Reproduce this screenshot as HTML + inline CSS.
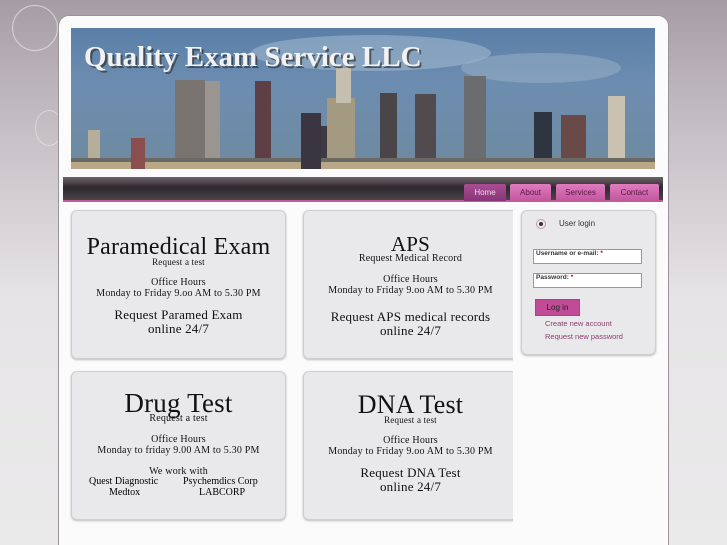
<!DOCTYPE html><html style="height:545px;background:#ebeaeb"><head><meta charset="utf-8"><style>
*{margin:0;padding:0;box-sizing:border-box}
html{overflow:hidden}
body{width:727px;height:545px;overflow:hidden;position:relative;font-family:"Liberation Serif",serif}
.bg{position:absolute;left:0;top:0;width:727px;height:545px;background:linear-gradient(#a69da4 0,#c8c2c7 140px,#e6e4e6 300px,#ebeaeb 545px)}
.a{position:absolute}
.wrap{left:58px;top:15px;width:611px;height:545px;background:#fbfbfb;border-radius:11px;border:1px solid #9a949a}
.card{position:absolute;background:#e9e8ea;border:1px solid #cfcdd0;border-radius:6px;box-shadow:0 1px 2px #bbb}
.t{position:absolute;left:0;right:0;text-align:center;color:#111;white-space:nowrap;letter-spacing:.2px}
.tab{position:absolute;top:184px;height:17px;background:linear-gradient(#e07bbf,#c2579c);color:#5a1848;font:8px "Liberation Sans",sans-serif;text-align:center;line-height:17px;border-radius:2px 2px 0 0}
</style></head><body>
<div class="bg"></div>
<div class="a" style="left:12px;top:5px;width:46px;height:46px;border-radius:50%;border:1px solid rgba(255,255,255,.5)"></div>
<div class="a" style="left:35px;top:110px;width:28px;height:36px;border-radius:50%;border:1px solid rgba(255,255,255,.4)"></div>
<div class="a wrap"></div>
<svg class="a" style="left:71px;top:28px" width="584" height="141" viewBox="0 0 584 141">
<defs><linearGradient id="s" x1="0" y1="0" x2="0" y2="1"><stop offset="0" stop-color="#5a7fa8"/><stop offset=".4" stop-color="#6d8db0"/><stop offset="1" stop-color="#6f8aa0"/></linearGradient></defs>
<rect width="584" height="141" fill="url(#s)"/>
<ellipse cx="300" cy="25" rx="120" ry="18" fill="#a9bfd4" opacity=".5"/>
<ellipse cx="470" cy="40" rx="80" ry="15" fill="#9ab1c8" opacity=".5"/>
<g fill="#4a4548">
<rect x="17" y="102" width="12" height="39" fill="#b7ae9a"/>
<rect x="104" y="52" width="30" height="89" fill="#7a7470"/>
<rect x="134" y="53" width="15" height="88" fill="#9a9590"/>
<rect x="184" y="53" width="16" height="88" fill="#5e3f45"/>
<rect x="240" y="98" width="25" height="43" fill="#3e3a44"/>
<rect x="256" y="70" width="28" height="71" fill="#a49a82"/>
<rect x="265" y="40" width="15" height="35" fill="#c5bfb0"/>
<rect x="309" y="65" width="17" height="76"/>
<rect x="344" y="66" width="21" height="75" fill="#514a4e"/>
<rect x="393" y="48" width="22" height="93" fill="#6b6c70"/>
<rect x="463" y="84" width="18" height="57" fill="#2e3440"/>
<rect x="490" y="87" width="25" height="54" fill="#6a4a48"/>
<rect x="537" y="68" width="17" height="73" fill="#c9c2b0"/>
<rect x="0" y="130" width="584" height="11" fill="#6a6a62"/>
<rect x="0" y="134" width="584" height="7" fill="#b8a888"/>
<rect x="60" y="110" width="14" height="31" fill="#8a4e4e"/>
<rect x="230" y="85" width="20" height="56" fill="#3a3540"/>
</g>
<text x="15" y="40" font-family="Liberation Serif" font-weight="bold" font-size="29" fill="#333" opacity=".7">Quality Exam Service LLC</text>
<text x="13" y="38" font-family="Liberation Serif" font-weight="bold" font-size="29" fill="#f2f2f2">Quality Exam Service LLC</text>
</svg>
<div class="a" style="left:63px;top:177px;width:600px;height:25px;background:linear-gradient(#6e6369,#2e2a2e 45%,#4a4448);border-bottom:2px solid #c25aa0"></div>
<div class="tab" style="left:464px;width:42px;background:linear-gradient(#a84d93,#8a3578);color:#f0d8ea">Home</div>
<div class="tab" style="left:510px;width:41px">About</div>
<div class="tab" style="left:556px;width:49px">Services</div>
<div class="tab" style="left:610px;width:49px">Contact</div>

<div class="card" style="left:71px;top:210px;width:215px;height:149px">
<div class="t" style="top:23px;font-size:24px">Paramedical Exam</div>
<div class="t" style="top:46px;font-size:9px">Request a test</div>
<div class="t" style="top:66px;font-size:10px">Office Hours</div>
<div class="t" style="top:77px;font-size:10px">Monday to Friday 9.oo AM to 5.30 PM</div>
<div class="t" style="top:96px;font-size:13px">Request Paramed Exam</div>
<div class="t" style="top:110px;font-size:13px">online 24/7</div>
</div>
<div class="card" style="left:303px;top:210px;width:215px;height:149px">
<div class="t" style="top:21px;font-size:21px">APS</div>
<div class="t" style="top:42px;font-size:10px">Request Medical Record</div>
<div class="t" style="top:63px;font-size:10px">Office Hours</div>
<div class="t" style="top:74px;font-size:10px">Monday to Friday 9.oo AM to 5.30 PM</div>
<div class="t" style="top:98px;font-size:13px">Request APS medical records</div>
<div class="t" style="top:112px;font-size:13px">online 24/7</div>
</div>
<div class="card" style="left:71px;top:371px;width:215px;height:149px">
<div class="t" style="top:16px;font-size:27px">Drug Test</div>
<div class="t" style="top:41px;font-size:10px">Request a test</div>
<div class="t" style="top:62px;font-size:10px">Office Hours</div>
<div class="t" style="top:73px;font-size:10px">Monday to friday 9.00 AM to 5.30 PM</div>
<div class="t" style="top:94px;font-size:10px">We work with</div>
<div class="a" style="top:104px;left:17px;font-size:10px">Quest Diagnostic</div>
<div class="a" style="top:104px;left:111px;font-size:10px">Psychemdics Corp</div>
<div class="a" style="top:115px;left:37px;font-size:10px">Medtox</div>
<div class="a" style="top:115px;left:127px;font-size:10px">LABCORP</div>
</div>
<div class="card" style="left:303px;top:371px;width:215px;height:149px">
<div class="t" style="top:18px;font-size:26px">DNA Test</div>
<div class="t" style="top:43px;font-size:9px">Request a test</div>
<div class="t" style="top:63px;font-size:10px">Office Hours</div>
<div class="t" style="top:74px;font-size:10px">Monday to Friday 9.oo AM to 5.30 PM</div>
<div class="t" style="top:93px;font-size:13px">Request DNA Test</div>
<div class="t" style="top:107px;font-size:13px">online 24/7</div>
</div>
<div class="a" style="left:513px;top:205px;width:8px;height:340px;background:#fbfbfb"></div>

<div class="card" style="left:521px;top:210px;width:135px;height:145px;font-family:'Liberation Sans',sans-serif;color:#333">
<div class="a" style="left:14px;top:8px;width:10px;height:10px;border-radius:50%;border:1px solid #c9a"></div>
<div class="a" style="left:17px;top:11px;width:4px;height:4px;border-radius:50%;background:#333"></div>
<div class="a" style="left:37px;top:8px;font-size:8px">User login</div>
<div class="a" style="left:11px;top:38px;width:109px;height:15px;background:#fff;border:1px solid #999;font-size:6.5px;font-weight:bold;padding-left:2px">Username or e-mail: <span style="color:#c00">*</span></div>
<div class="a" style="left:11px;top:62px;width:109px;height:15px;background:#fff;border:1px solid #999;font-size:6.5px;font-weight:bold;padding-left:2px">Password: <span style="color:#c00">*</span></div>
<div class="a" style="left:13px;top:88px;width:45px;height:17px;background:#c04c98;border:1px solid #a8447f;font-size:8px;line-height:15px;text-align:center;color:#222">Log in</div>
<div class="a" style="left:23px;top:108px;font-size:7.5px;color:#8a4070">Create new account</div>
<div class="a" style="left:23px;top:121px;font-size:7.5px;color:#8a4070">Request new password</div>
</div>
</body></html>
